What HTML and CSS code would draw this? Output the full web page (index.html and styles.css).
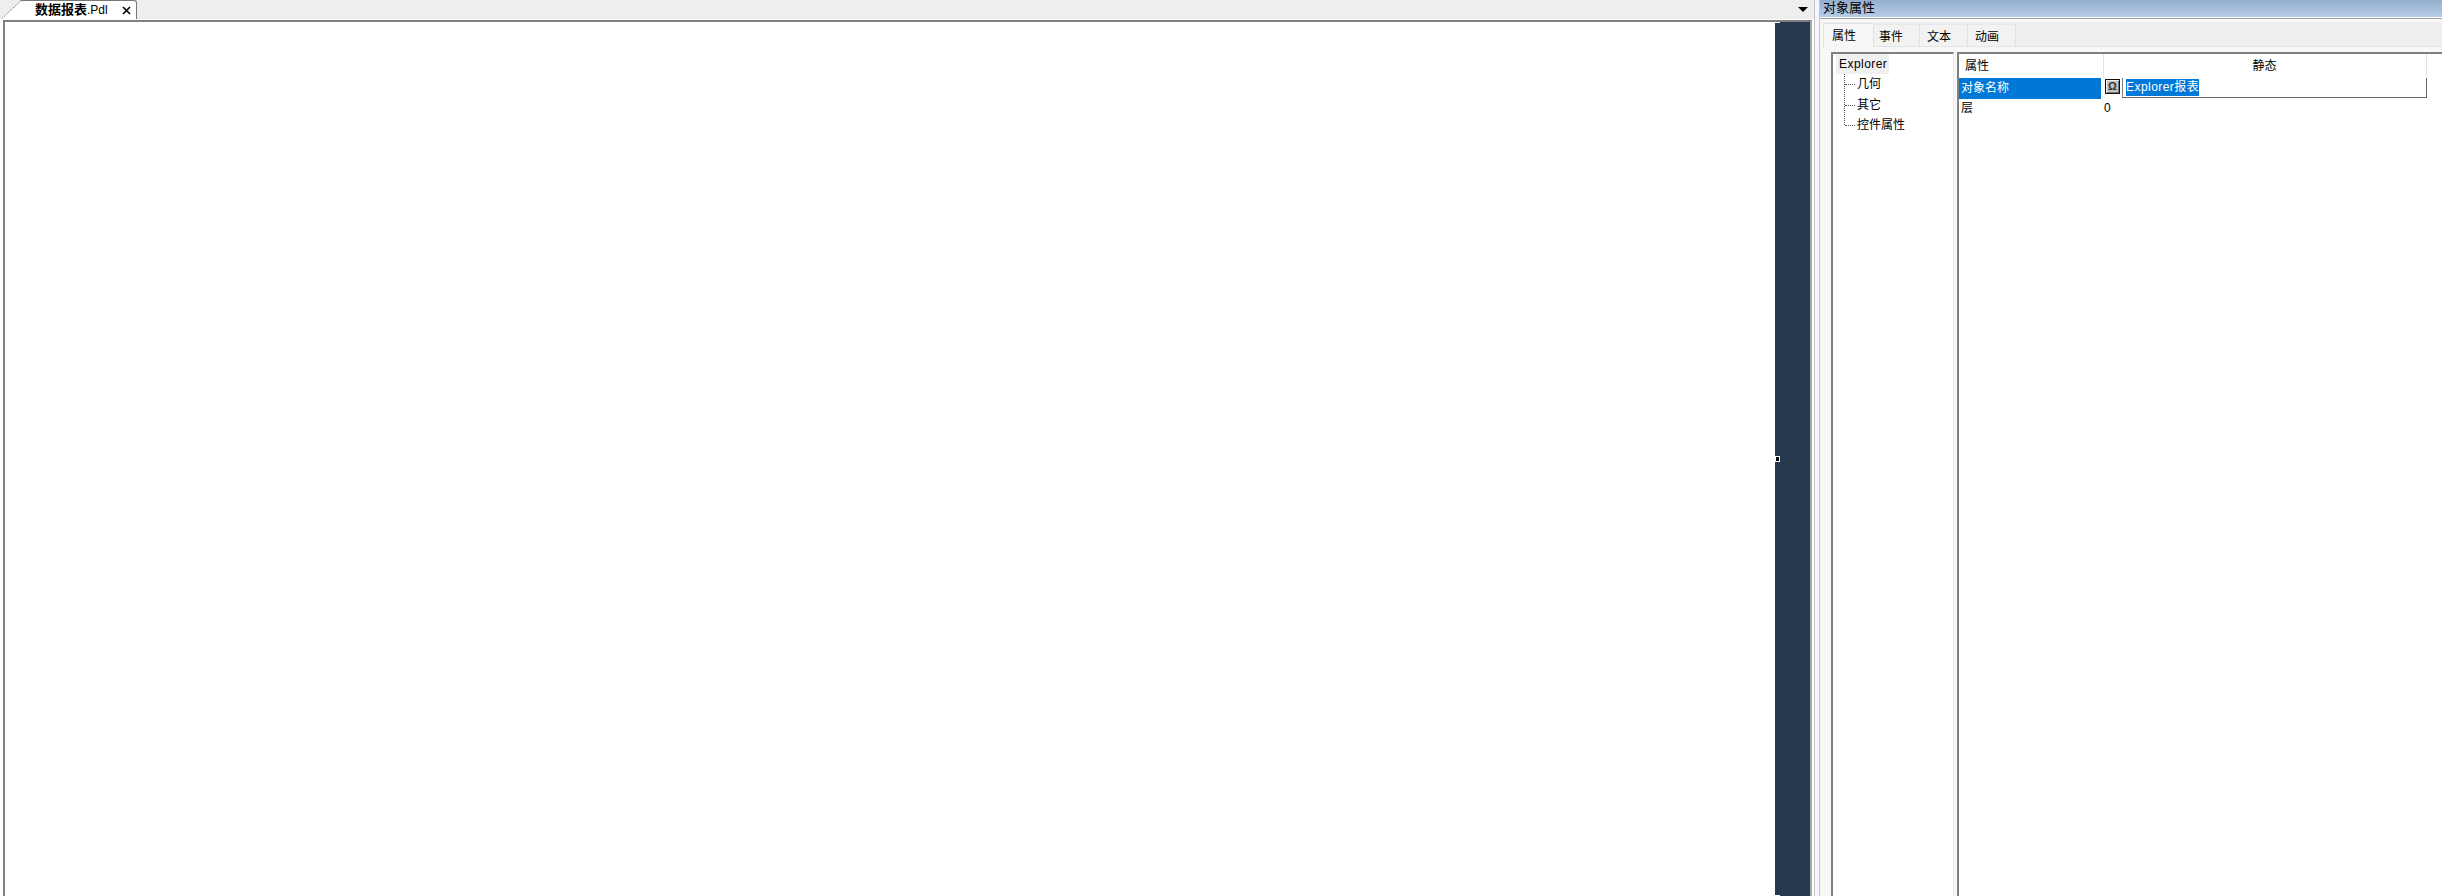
FILE: index.html
```html
<!DOCTYPE html>
<html lang="zh-CN">
<head>
<meta charset="utf-8">
<title>数据报表</title>
<link rel="stylesheet" href="styles.css">
</head>
<body>
<div class="app">
  <main class="editor">
    <div class="tabstrip">
      <svg class="tab-slant" width="21" height="19" viewBox="0 0 21 19"><path d="M0 19 L20 0.5 H21 V19 Z" fill="#fff"/><path d="M1 18.5 L20 0.5 H21" fill="none" stroke="#777" stroke-dasharray="1.5 1"/></svg>
      <div class="tab">
        <span class="tab-name"><b>数据报表</b>.Pdl</span>
        <svg class="tab-close" width="9" height="9" viewBox="0 0 9 9"><path d="M1 1 L8 8 M8 1 L1 8" stroke="#000" stroke-width="1.6"/></svg>
      </div>
      <div class="strip-fill"></div>
      <svg class="strip-arrow" width="10" height="5" viewBox="0 0 10 5"><path d="M0 0 H10 L5 5 Z" fill="#000"/></svg>
    </div>
    <div class="canvas-frame">
      <div class="canvas">
        <div class="page"></div>
        <div class="dark-panel">
          <span class="handle handle-top"></span>
          <span class="handle handle-mid"></span>
          <span class="handle handle-bottom"></span>
        </div>
      </div>
    </div>
  </main>
  <div class="splitter"><div class="splitter-cell"></div></div>
  <aside class="props">
    <header class="props-title">对象属性</header>
    <div class="props-body">
      <nav class="prop-tabs">
        <span class="prop-tab active">属性</span>
        <span class="prop-tab tab-narrow">事件</span>
        <span class="prop-tab">文本</span>
        <span class="prop-tab">动画</span>
      </nav>
      <div class="panes">
        <div class="tree">
          <div class="tree-root">Explorer</div>
          <div class="tree-items">
            <div class="tree-item">几何</div>
            <div class="tree-item">其它</div>
            <div class="tree-item">控件属性</div>
          </div>
        </div>
        <div class="grid">
          <div class="grid-head">
            <div class="col-name head-name">属性</div>
            <div class="col-value head-value">静态</div>
          </div>
          <div class="grid-row row-selected">
            <div class="col-name name-selected">对象名称</div>
            <div class="col-value value-edit">
              <span class="omega">Ω</span>
              <div class="edit-box"><span class="edit-text">Explorer报表</span></div>
            </div>
          </div>
          <div class="grid-row">
            <div class="col-name name-plain">层</div>
            <div class="col-value plain-value">0</div>
          </div>
        </div>
      </div>
    </div>
  </aside>
</div>
</body>
</html>
```
FILE: styles.css
```css
* { box-sizing: border-box; }
html, body { margin: 0; height: 100%; overflow: hidden; background: #fff; }
body { font: 12px/16px "Noto Sans CJK SC", "Liberation Sans", sans-serif; color: #000; }
.app { display: flex; width: 2442px; height: 896px; }

/* left editor */
.editor { width: 1814px; flex: none; display: flex; flex-direction: column; }
.tabstrip { height: 19px; flex: none; display: flex; align-items: stretch; background: #eee; padding-left: 1px; }
.tab-slant { flex: none; }
.tab { width: 116px; flex: none; background: #fff; border-top: 1px solid #777; border-right: 1px solid #777; border-radius: 0 3px 0 0; display: flex; align-items: center; padding: 0 3px 2px 14px; justify-content: space-between; margin-left: -1px; }
.tab-name { font-size: 12px; line-height: 16px; white-space: nowrap; font-family: "Liberation Sans", "Noto Sans CJK SC", sans-serif; }
.tab-name b { font-family: "Noto Sans CJK SC", sans-serif; font-size: 13px; font-weight: 700; }
.tab-close { flex: none; margin-top: 2px; margin-right: 2px; }
.strip-fill { flex: 1; }
.strip-arrow { flex: none; align-self: center; margin-right: 6px; }
.canvas-frame { flex: 1; padding: 1px 2px 0 3px; min-height: 0; }
.canvas { height: 100%; border-top: 2px solid #808080; border-left: 2px solid #808080; border-right: 2px solid #a8a8a8; display: flex; }
.page { flex: 1; background: #fff; }
.dark-panel { width: 35px; flex: none; background: #26394e; position: relative; }
.handle { position: absolute; left: 0; width: 5px; background: #fff; }
.handle-top { top: 0; height: 1px; }
.handle-mid { top: 434px; height: 6px; background: #000; border: 1px solid #fff; }
.handle-bottom { bottom: 0; height: 1px; }

/* splitter */
.splitter { width: 6px; flex: none; border-left: 1px solid #c4c4c4; border-right: 1px solid #c4c4c4; background: #f5f5ff; }
.splitter-cell { height: 100%; }

/* properties */
.props { flex: 1; min-width: 0; display: flex; flex-direction: column; }
.props-title { height: 17px; flex: none; background: linear-gradient(#94aecd, #b6cee8); font-size: 13px; line-height: 14px; padding-left: 3px; }
.props-body { flex: 1; min-height: 0; border-top: 1px solid #a2a2a6; margin-top: 1px; padding-left: 3px; background: #f7f7f7; display: flex; flex-direction: column; }
.prop-tabs { height: 28px; flex: none; display: flex; align-items: flex-end; background: #eee; border-top: 3px solid #f7f7f7; border-bottom: 1px solid #e4e4e4; }
.prop-tab { width: 48px; height: 22px; flex: none; background: #f2f2f2; border-right: 1px solid #e2e2e2; border-top: 1px solid #e8e8e8; font-size: 12px; line-height: 22px; padding-left: 7px; }
.prop-tab.tab-narrow { width: 46px; padding-left: 5px; }
.prop-tab.active { width: 51px; background: #f7f7f7; height: 24px; line-height: 21px; padding: 0 0 0 8px; margin-bottom: -1px; border-top: 1px solid #e2e2e2; border-left: 1px solid #e2e2e2; }
.panes { flex: 1; min-height: 0; display: flex; padding: 5px 0 0 8px; gap: 3px; }
.tree { width: 123px; flex: none; background: #fff; border-top: 2px solid #808080; border-left: 2px solid #808080; border-right: 1px solid #e8e8e8; padding: 0 0 0 3px; }
.tree-root { width: 53px; height: 20px; background: #f0f0f0; padding-left: 3px; font-size: 12px; line-height: 20px; letter-spacing: 0.45px; font-family: "Liberation Sans", sans-serif; }
.tree-items { margin-left: 8px; border-left: 1px dotted #555; height: 51px; }
.tree-item { height: 20.5px; line-height: 18px; padding-left: 12px; position: relative; white-space: nowrap; }
.tree-item::before { content: ""; position: absolute; left: 0; top: 10px; width: 10px; border-top: 1px dotted #555; }
.grid { flex: 1; min-width: 0; background: #fff; border-top: 2px solid #808080; border-left: 2px solid #808080; }
.grid-head, .grid-row { display: flex; }
.grid-head { height: 24px; }
.grid-row { height: 21px; }
.col-name { width: 144px; flex: none; padding-left: 2px; line-height: 18px; }
.name-plain { line-height: 16px; }
.col-value { width: 324px; flex: none; }
.head-name { padding-left: 6px; line-height: 22px; }
.head-value { border-left: 1px solid #e4e4e4; border-right: 1px solid #e4e4e4; text-align: center; line-height: 22px; padding-right: 1px; }
.name-selected { background: #0078d7; color: #fff; height: 21px; width: 142px; margin-right: 2px; }
.value-edit { display: flex; padding-left: 2px; gap: 2px; }
.omega { width: 15px; height: 15px; margin-top: 1px; flex: none; background: #c4c4c4; border: 1px solid #111; box-shadow: inset 1px 1px 0 #eee, inset -1px -1px 0 #777; font: 700 11px/13px "Liberation Sans", sans-serif; text-align: center; color: #333; }
.edit-box { flex: 1; height: 20px; border-left: 1px solid #808080; border-right: 1px solid #666; border-bottom: 1px solid #666; padding-left: 3px; }
.edit-text { display: inline-block; height: 17px; background: #0078d7; color: #fff; line-height: 16px; font-family: "Liberation Sans", "Noto Sans CJK SC", sans-serif; font-size: 12px; letter-spacing: 0.45px; white-space: nowrap; }
.plain-value { padding-left: 1px; line-height: 18px; font-family: "Liberation Sans", sans-serif; }
```
